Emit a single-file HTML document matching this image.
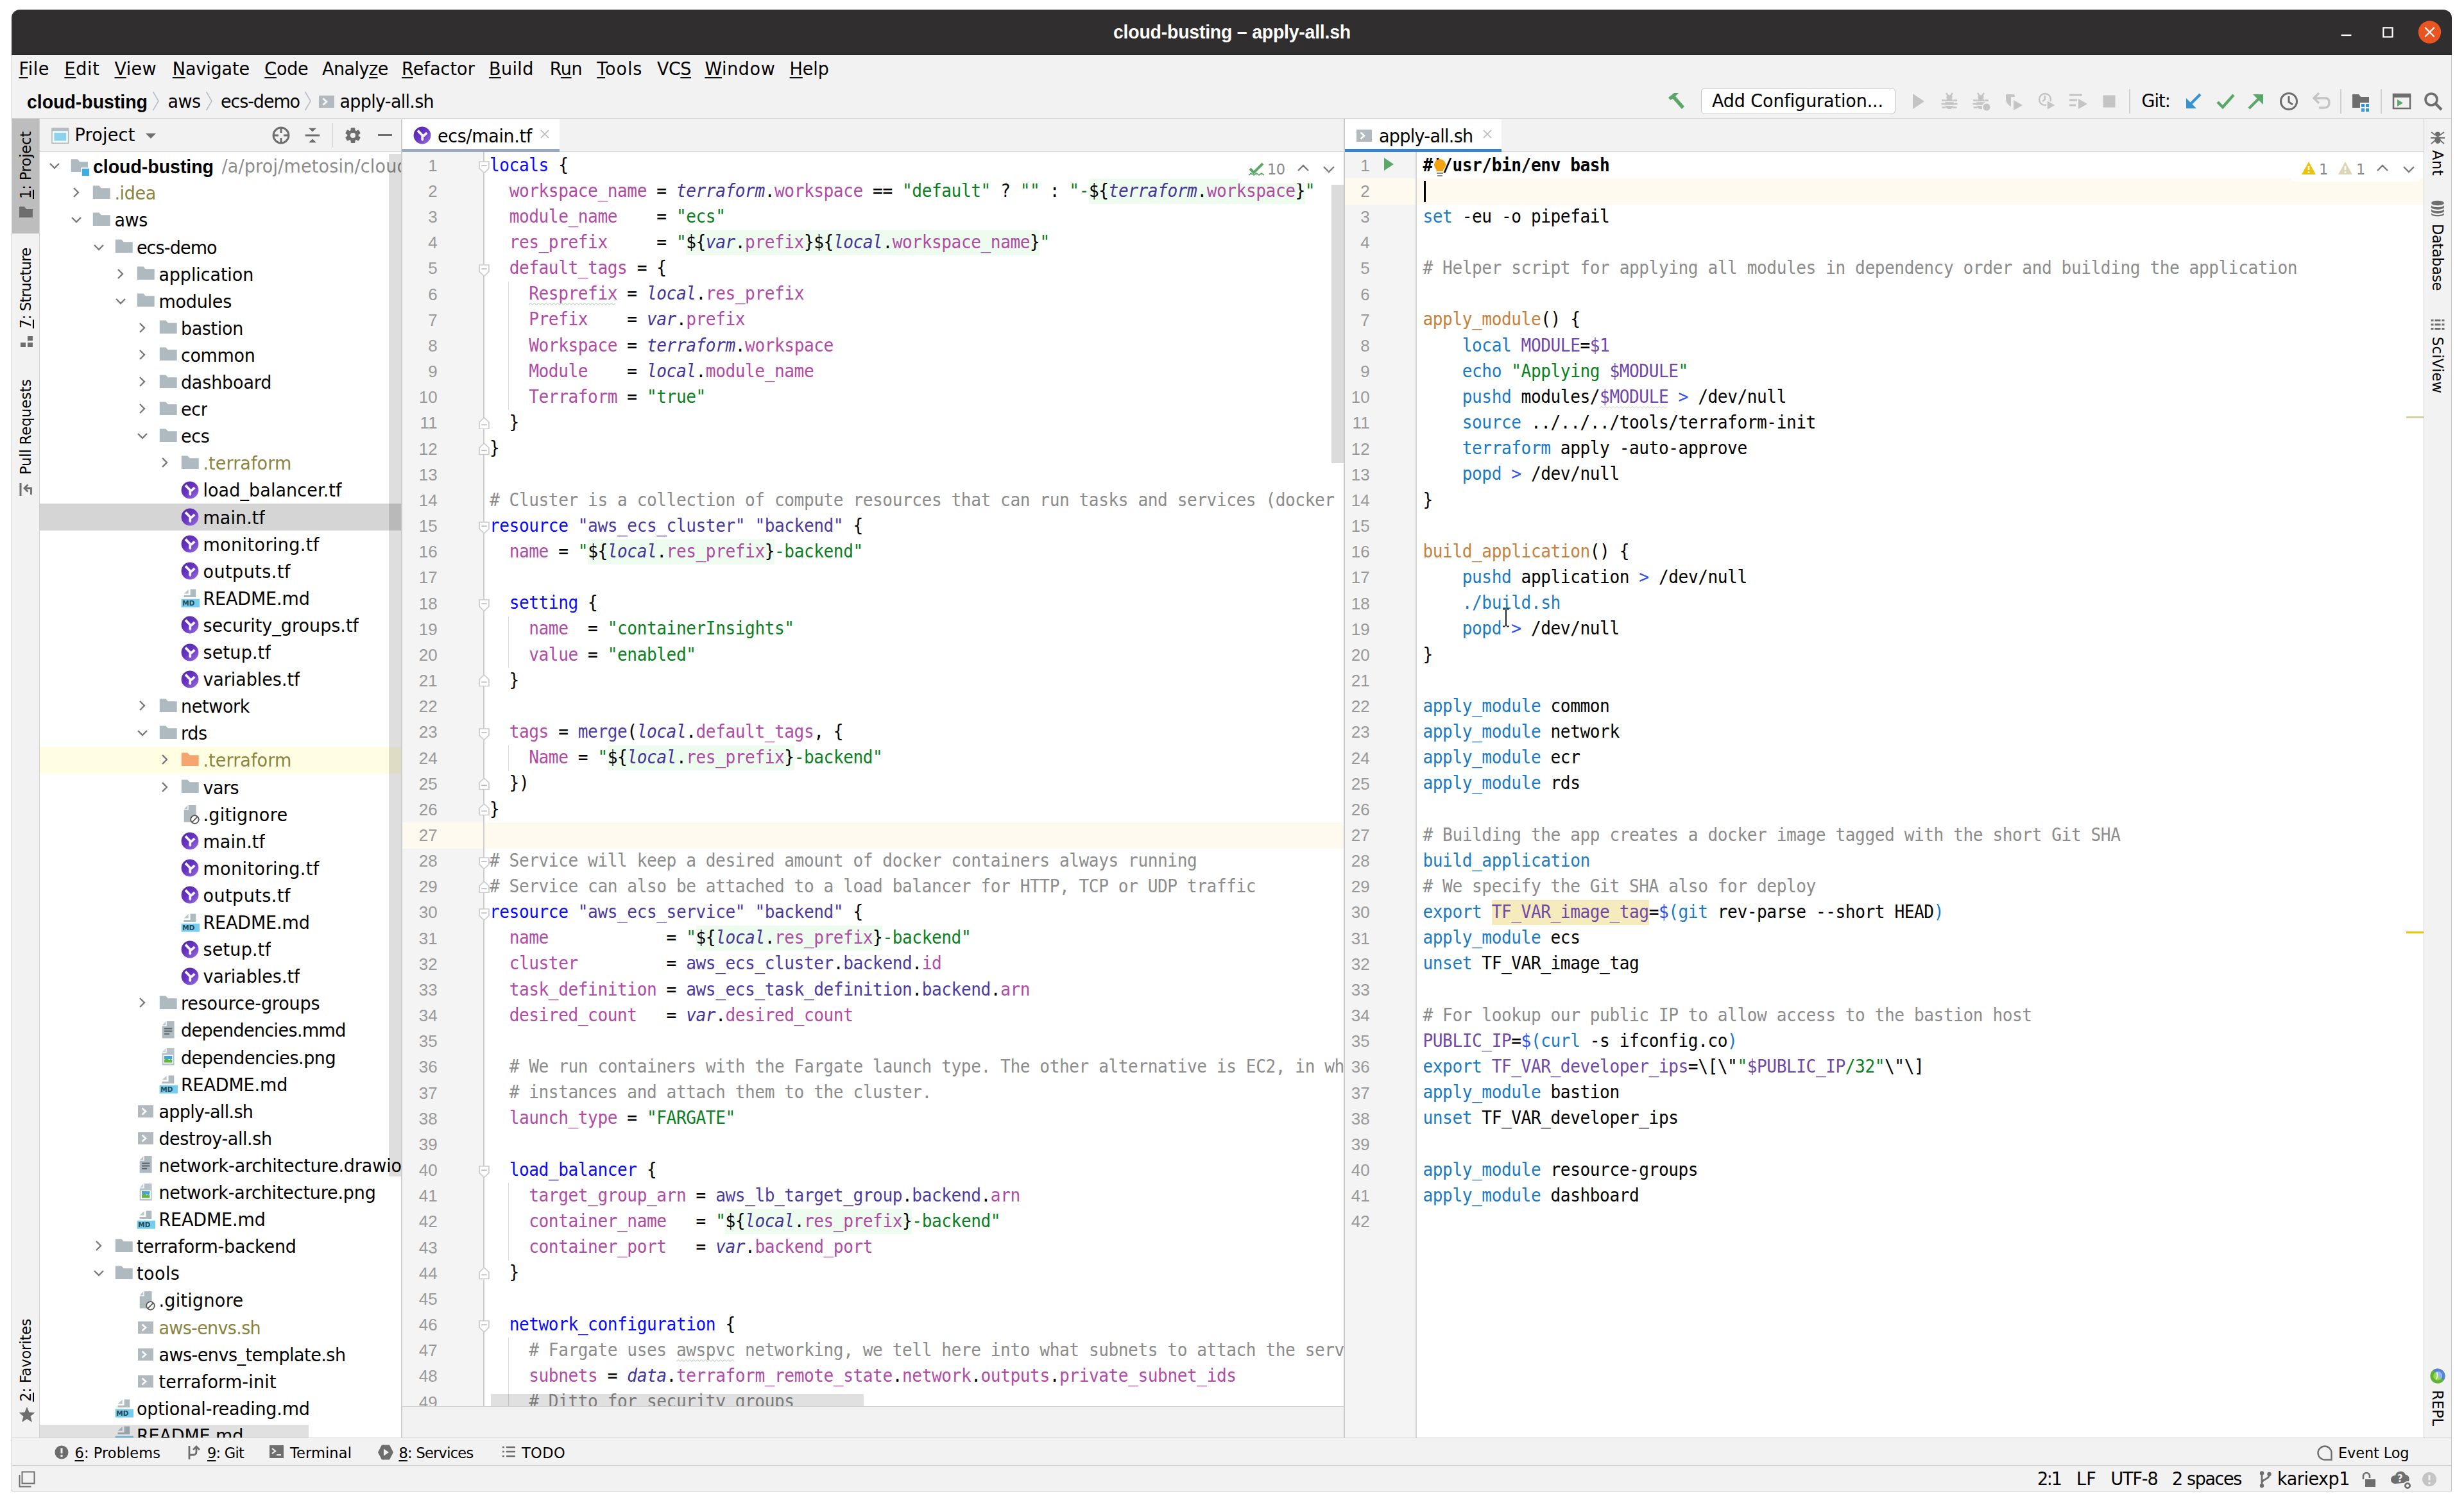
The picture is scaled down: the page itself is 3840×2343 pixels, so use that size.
<!DOCTYPE html>
<html lang="en"><head><meta charset="utf-8"><title>cloud-busting – apply-all.sh</title>
<style>
*{box-sizing:border-box}
html,body{margin:0;padding:0}
body{width:3840px;height:2343px;background:#fff;position:relative;overflow:hidden;font-family:'DejaVu Sans','Liberation Sans',sans-serif;font-size:27px;letter-spacing:-.35px;color:#000;-webkit-font-smoothing:antialiased}
div,svg{position:absolute}
div{white-space:pre}
span{white-space:pre}
u{text-decoration:underline;text-decoration-thickness:1.8px;text-underline-offset:2.5px}
.m{font-family:'DejaVu Sans Mono','Liberation Mono',monospace;font-size:25.44px;letter-spacing:0}
.ln{font-family:'DejaVu Sans Mono','Liberation Mono',monospace;font-size:26.2px;letter-spacing:-.457px;height:40.16px;line-height:40.16px;transform:scaleY(1.0875);transform-origin:0 29.14px}
.no{font-family:'Liberation Sans','DejaVu Sans',sans-serif;font-size:26px;letter-spacing:.2px;color:#999;text-align:right;height:40.16px;line-height:40.16px;width:60px}
.tr{height:42px;line-height:42px}
.k{color:#0a0aff}.p{color:#b04ba6}.s{color:#0a8020}.i{color:#43359a;font-style:italic}.r{color:#4b3aa0}.c{color:#8c8c8c}
.j{background:#edfcee;padding:2.17px 0 4.27px}
.b{color:#1a7bc4}.v{color:#7048a8}.f{color:#c8813c}.o{color:#2c50f5}.B{font-weight:bold}
.ol{color:#8a8440}
</style></head>
<body>

<svg width="0" height="0" style="left:0;top:0"><defs>
<symbol id="fold" viewBox="0 0 32 32"><path d="M2.800 4.600H12.400L15.700 8.300H29.700V24.900H2.800Z" fill="#aeb9c0"/></symbol>
<symbol id="foldx" viewBox="0 0 32 32"><path d="M2.800 4.600H12.400L15.700 8.300H29.700V24.900H2.800Z" fill="#f4a570"/></symbol>
<linearGradient id="tfg" x1="0.15" y1="0.1" x2="0.85" y2="0.9"><stop offset="0" stop-color="#552aa8"/><stop offset=".5" stop-color="#6a35c4"/><stop offset="1" stop-color="#8d66d4"/></linearGradient>
<symbol id="tf" viewBox="0 0 32 32"><circle cx="16" cy="16" r="13.400" fill="url(#tfg)"/><path d="M9 8.600L16.300 16 M23.300 12.200L17.600 17.300 M16.300 14.500V23.200" stroke="#fff" stroke-width="3.800" fill="none" opacity=".96"/><path d="M14.400 23.200h3.800l-1.900 1.800z" fill="#fff" opacity=".96"/></symbol>
<symbol id="md" viewBox="0 0 32 32"><path d="M16.600 2.500H25.300V15H6.500V12.100H16.600Z" fill="#aeb9c0"/><path d="M13.700 3.100V9.400H6.500Z" fill="#bcc5cb"/><rect x="2.600" y="17.700" width="28.400" height="12.900" fill="#74cdec"/><text x="4.200" y="28.200" font-size="10.500" font-weight="bold" fill="#2a4754" font-family="'DejaVu Sans','Liberation Sans',sans-serif" letter-spacing="0">MD</text></symbol>
<symbol id="sh" viewBox="0 0 32 32"><rect x="4" y="7" width="24" height="19" fill="#b2bac0"/><path d="M10.500 11.500 L16 16.500 L10.500 21.500" stroke="#fff" stroke-width="2.600" fill="none"/></symbol>
<symbol id="doc" viewBox="0 0 32 32"><path d="M13.700 2.100H25.600V28.400H6.700V9.600H13.700Z" fill="#aeb9c0"/><path d="M12.300 2.300V8.200H6.900Z" fill="#bcc5cb"/><path d="M10.100 13.600h12.200M10.100 17.600h12.200M10.100 21.700h8" stroke="#59636a" stroke-width="2"/></symbol>
<symbol id="img" viewBox="0 0 32 32"><path d="M13.700 2.100H25.600V28.400H6.700V9.600H13.700Z" fill="#b9c2c8"/><path d="M12.300 2.300V8.200H6.900Z" fill="#c6ced3"/><rect x="8.600" y="12.600" width="15.200" height="13.400" fill="#fff"/><rect x="10" y="14" width="12.400" height="5" fill="#40a6dd"/><path d="M10 24.600V20l3.600-3 4 3.400 2.400-1.600 2.400 1.800v4z" fill="#62b543"/></symbol>
<symbol id="gi" viewBox="0 0 32 32"><path d="M13.700 2.100H25.600V28.400H6.700V9.600H13.700Z" fill="#aeb9c0"/><path d="M12.300 2.300V8.200H6.900Z" fill="#bcc5cb"/><circle cx="23.500" cy="24.500" r="6.300" fill="#fff" stroke="#555" stroke-width="1.800"/><path d="M19.200 28.800 L27.800 20.200" stroke="#555" stroke-width="1.800"/></symbol>
<symbol id="ar" viewBox="0 0 20 20"><path d="M6 3 L13 10 L6 17" stroke="#7a7a7a" stroke-width="2.4" fill="none"/></symbol>
<symbol id="ad" viewBox="0 0 20 20"><path d="M3 6 L10 13 L17 6" stroke="#7a7a7a" stroke-width="2.4" fill="none"/></symbol>
</defs></svg>

<div style="left:18px;top:15px;width:3803.3px;height:2310px;background:#f2f2f2;border-radius:13px 13px 0 0;border:1.3px solid #c4c4c4;border-top:none;"></div>
<div style="left:18px;top:15px;width:3803.3px;height:71px;background:#302e2f;border-radius:13px 13px 0 0;"></div>
<div style="left:18px;top:15px;height:71px;line-height:71px;transform:scaleY(1.035);transform-origin:0 44.8px;width:3804px;text-align:center;"><span style="font-family:'Liberation Sans','DejaVu Sans',sans-serif;font-size:28.5px;font-weight:700;letter-spacing:-0.246px;color:#fff;">cloud-busting – apply-all.sh</span></div>
<svg style="left:3600px;top:15px" width="222" height="71"><path d="M48.600 39.900h15.800" stroke="#fff" stroke-width="2.400"/><rect x="114.300" y="28.300" width="14.200" height="14.200" fill="none" stroke="#fff" stroke-width="2.200"/><circle cx="186.500" cy="35.100" r="17.700" fill="#e95420"/><path d="M179.300 27.900l14.400 14.400M193.700 27.900l-14.400 14.400" stroke="#fff" stroke-width="2.200"/></svg>
<div style="left:18px;top:85px;width:3803.3px;height:1.2px;background:#1c1b1b;"></div>
<div style="left:29.5px;top:84.5px;height:46px;line-height:46px;transform:scaleY(1.035);transform-origin:0 32.3px;"><span style="letter-spacing:0.578px;"><u>F</u>ile</span></div>
<div style="left:100.4px;top:84.5px;height:46px;line-height:46px;transform:scaleY(1.035);transform-origin:0 32.3px;"><span style="letter-spacing:0.676px;"><u>E</u>dit</span></div>
<div style="left:178.5px;top:84.5px;height:46px;line-height:46px;transform:scaleY(1.035);transform-origin:0 32.3px;"><span style="letter-spacing:0.355px;"><u>V</u>iew</span></div>
<div style="left:268.8px;top:84.5px;height:46px;line-height:46px;transform:scaleY(1.035);transform-origin:0 32.3px;"><span style="letter-spacing:-0.126px;"><u>N</u>avigate</span></div>
<div style="left:412.3px;top:84.5px;height:46px;line-height:46px;transform:scaleY(1.035);transform-origin:0 32.3px;"><span style="letter-spacing:-0.231px;"><u>C</u>ode</span></div>
<div style="left:502.0px;top:84.5px;height:46px;line-height:46px;transform:scaleY(1.035);transform-origin:0 32.3px;"><span style="letter-spacing:-0.529px;">Analy<u>z</u>e</span></div>
<div style="left:626.0px;top:84.5px;height:46px;line-height:46px;transform:scaleY(1.035);transform-origin:0 32.3px;"><span style="letter-spacing:0.067px;"><u>R</u>efactor</span></div>
<div style="left:762.1px;top:84.5px;height:46px;line-height:46px;transform:scaleY(1.035);transform-origin:0 32.3px;"><span style="letter-spacing:0.364px;"><u>B</u>uild</span></div>
<div style="left:856.7px;top:84.5px;height:46px;line-height:46px;transform:scaleY(1.035);transform-origin:0 32.3px;"><span style="letter-spacing:-0.394px;">R<u>u</u>n</span></div>
<div style="left:930.3px;top:84.5px;height:46px;line-height:46px;transform:scaleY(1.035);transform-origin:0 32.3px;"><span style="letter-spacing:0.897px;"><u>T</u>ools</span></div>
<div style="left:1024.0px;top:84.5px;height:46px;line-height:46px;transform:scaleY(1.035);transform-origin:0 32.3px;"><span style="letter-spacing:-0.49px;">VC<u>S</u></span></div>
<div style="left:1098.4px;top:84.5px;height:46px;line-height:46px;transform:scaleY(1.035);transform-origin:0 32.3px;"><span style="letter-spacing:0.572px;"><u>W</u>indow</span></div>
<div style="left:1230.6px;top:84.5px;height:46px;line-height:46px;transform:scaleY(1.035);transform-origin:0 32.3px;"><span style="letter-spacing:-0.091px;"><u>H</u>elp</span></div>
<div style="left:42px;top:135px;height:48px;line-height:48px;transform:scaleY(1.035);transform-origin:0 33.3px;"><span style="font-family:'Liberation Sans','DejaVu Sans',sans-serif;font-size:28.5px;font-weight:700;letter-spacing:-0.03px;">cloud-busting</span></div>
<div style="left:261.5px;top:135px;height:48px;line-height:48px;transform:scaleY(1.035);transform-origin:0 33.3px;"><span style="letter-spacing:-0.568px;">aws</span></div>
<div style="left:344px;top:135px;height:48px;line-height:48px;transform:scaleY(1.035);transform-origin:0 33.3px;"><span style="letter-spacing:-1.105px;">ecs-demo</span></div>
<div style="left:529.5px;top:135px;height:48px;line-height:48px;transform:scaleY(1.035);transform-origin:0 33.3px;"><span style="letter-spacing:-0.699px;">apply-all.sh</span></div>
<svg style="left:235px;top:141.500px" width="16" height="32"><path d="M3.500 1 L12 15.500 L3.500 30" stroke="#b5bdc6" stroke-width="1.600" fill="none"/></svg>
<svg style="left:317.8px;top:141.500px" width="16" height="32"><path d="M3.500 1 L12 15.500 L3.500 30" stroke="#b5bdc6" stroke-width="1.600" fill="none"/></svg>
<svg style="left:472.3px;top:141.500px" width="16" height="32"><path d="M3.500 1 L12 15.500 L3.500 30" stroke="#b5bdc6" stroke-width="1.600" fill="none"/></svg>
<svg style="left:492.5px;top:141.5px" width="32" height="32"><use href="#sh"/></svg>
<div style="left:19px;top:184.2px;width:3801.3px;height:1.7px;background:#d3d3d3;"></div>
<div style="left:2651px;top:137px;width:303px;height:41px;background:#fff;border:1.5px solid #c4c4c4;border-radius:6px;"></div>
<div style="left:2668px;top:137px;height:41px;line-height:41px;transform:scaleY(1.035);transform-origin:0 29.8px;"><span style="letter-spacing:-0.136px;">Add Configuration...</span></div>
<div style="left:3337.5px;top:137px;height:41px;line-height:41px;transform:scaleY(1.035);transform-origin:0 29.8px;"><span style="letter-spacing:-0.902px;">Git:</span></div>
<div style="left:3317.8px;top:139px;width:2px;height:38px;background:#d0d0d0;"></div>
<div style="left:3647px;top:139px;width:2px;height:38px;background:#d0d0d0;"></div>
<div style="left:3710px;top:139px;width:2px;height:38px;background:#d0d0d0;"></div>
<svg style="left:2597px;top:142px" width="32" height="32" viewBox="0 0 32 32"><path d="M3 10 L12 3 L19 3 L14 8 L28 24 L24 28 L10 12 L6 14 Z" fill="#59a869"/></svg>
<svg style="left:2974px;top:142px" width="32" height="32" viewBox="0 0 32 32"><path d="M7 4 L25 16 L7 28 Z" fill="#c4c4c4"/></svg>
<svg style="left:3022.4px;top:142px" width="32" height="32" viewBox="0 0 32 32"><ellipse cx="16" cy="19.500" rx="6.800" ry="8.800" fill="#c4c4c4"/><ellipse cx="16" cy="9.500" rx="4.600" ry="3.200" fill="#c4c4c4"/><path d="M11 3l3.500 5M21 3l-3.500 5M4 14.500h6M3.500 20h6M4.500 25.500h6M22 14.500h6M22.500 20h6M21.500 25.500h6" stroke="#c4c4c4" stroke-width="2.300"/><path d="M10 16.700h12M10 22.300h12" stroke="#f2f2f2" stroke-width="1.300"/></svg>
<svg style="left:3071px;top:142px" width="32" height="32" viewBox="0 0 32 32"><ellipse cx="16" cy="19.500" rx="6.800" ry="8.800" fill="#c4c4c4"/><ellipse cx="16" cy="9.500" rx="4.600" ry="3.200" fill="#c4c4c4"/><path d="M11 3l3.500 5M21 3l-3.500 5M4 14.500h6M3.500 20h6M4.500 25.500h6M22 14.500h6M22.500 20h6M21.500 25.500h6" stroke="#c4c4c4" stroke-width="2.300"/><path d="M10 16.700h12M10 22.300h12" stroke="#f2f2f2" stroke-width="1.300"/><circle cx="25" cy="25" r="6.5" fill="#c4c4c4" stroke="#f2f2f2" stroke-width="2"/></svg>
<svg style="left:3122.4px;top:142px" width="32" height="32" viewBox="0 0 32 32"><path d="M4 5 L16 5 Q18 5 18 9 L12 9 L12 24 Q4 20 4 12 Z" fill="#c4c4c4"/><path d="M16 14 L30 22 L16 30 Z" fill="#c4c4c4"/></svg>
<svg style="left:3174px;top:142px" width="32" height="32" viewBox="0 0 32 32"><circle cx="13" cy="13" r="9" fill="none" stroke="#c4c4c4" stroke-width="2.4"/><path d="M13 7v6l-4 3" stroke="#c4c4c4" stroke-width="2.2" fill="none"/><path d="M16 14 L30 22 L16 30 Z" fill="#c4c4c4" stroke="#f2f2f2" stroke-width="1.5"/></svg>
<svg style="left:3223px;top:142px" width="32" height="32" viewBox="0 0 32 32"><path d="M2 6h20M2 14h12M2 22h10" stroke="#c4c4c4" stroke-width="3"/><path d="M16 12 L30 20 L16 28 Z" fill="#c4c4c4"/></svg>
<svg style="left:3271.4px;top:142px" width="32" height="32" viewBox="0 0 32 32"><rect x="6.5" y="6.5" width="19" height="19" fill="#c4c4c4"/></svg>
<svg style="left:3402.4px;top:142px" width="32" height="32" viewBox="0 0 32 32"><path d="M27 5 L11 21" stroke="#3592d3" stroke-width="4.200" fill="none"/><path d="M5 11 L5 27 L21 27 Z" fill="#3592d3"/></svg>
<svg style="left:3452px;top:142px" width="32" height="32" viewBox="0 0 32 32"><path d="M4 17 L12 25 L29 6" stroke="#59a869" stroke-width="4.4" fill="none"/></svg>
<svg style="left:3500px;top:142px" width="32" height="32" viewBox="0 0 32 32"><path d="M5 27 L21 11" stroke="#59a869" stroke-width="4.200" fill="none"/><path d="M11 5 L27 5 L27 21 Z" fill="#59a869"/></svg>
<svg style="left:3550.5px;top:142px" width="32" height="32" viewBox="0 0 32 32"><circle cx="16" cy="16" r="12.5" fill="none" stroke="#6e6e6e" stroke-width="3"/><path d="M16 8v9l6 4" stroke="#6e6e6e" stroke-width="3" fill="none"/></svg>
<svg style="left:3602px;top:142px" width="32" height="32" viewBox="0 0 32 32"><path d="M6 11 L22 11 Q28 11 28 18 Q28 26 20 26 L12 26" stroke="#c4c4c4" stroke-width="3.4" fill="none"/><path d="M12 3 L4 11 L12 19" stroke="#c4c4c4" stroke-width="3.4" fill="none"/></svg>
<svg style="left:3663.6px;top:142px" width="32" height="32" viewBox="0 0 32 32"><path d="M2 5 L12 5 L15 9 L28 9 L28 18 L14 18 L14 26 L2 26 Z" fill="#6e6e6e"/><rect x="16" y="20" width="5" height="5" fill="#3592d3"/><rect x="23" y="20" width="5" height="5" fill="#3592d3"/><rect x="16" y="27" width="5" height="5" fill="#3592d3"/><rect x="23" y="27" width="5" height="5" fill="#3592d3"/></svg>
<svg style="left:3726.5px;top:142px" width="32" height="32" viewBox="0 0 32 32"><rect x="3" y="5" width="26" height="22" fill="none" stroke="#6e6e6e" stroke-width="2.6"/><rect x="3" y="4" width="26" height="6" fill="#6e6e6e"/><path d="M9 13 L18 18.5 L9 24 Z" fill="#59a869"/></svg>
<svg style="left:3776px;top:142px" width="32" height="32" viewBox="0 0 32 32"><circle cx="13" cy="13" r="9" fill="none" stroke="#6e6e6e" stroke-width="3.6"/><path d="M20 20 L29 29" stroke="#6e6e6e" stroke-width="4.4"/></svg>
<div style="left:19px;top:185px;width:43px;height:2056px;background:#f2f2f2;border-right:1px solid #d0d0d0;"></div>
<div style="left:19px;top:185px;width:42px;height:178.5px;background:#bdbdbd;"></div>
<div style="left:23.0px;top:309.7px;width:105.1px;height:34px;line-height:34px;transform-origin:0 0;transform:rotate(-90deg);font-size:22.5px;letter-spacing:-0.093px;"><u>1</u>: Project</div>
<svg style="left:29px;top:321px" width="24" height="19" viewBox="0 0 24 19"><path d="M1 18 L1 1 L9 1 L12 5 L22 5 L22 18 Z" fill="#6e6e6e"/></svg>
<div style="left:23.0px;top:512px;width:125.5px;height:34px;line-height:34px;transform-origin:0 0;transform:rotate(-90deg);font-size:22.5px;letter-spacing:-0.685px;"><u>7</u>: Structure</div>
<svg style="left:30px;top:523px" width="24" height="20" viewBox="0 0 24 20"><rect x="2" y="11" width="8" height="7" fill="#6e6e6e"/><rect x="13" y="11" width="8" height="7" fill="#6e6e6e"/><rect x="13" y="1" width="8" height="7" fill="#6e6e6e"/></svg>
<div style="left:23.0px;top:739.5px;width:149.0px;height:34px;line-height:34px;transform-origin:0 0;transform:rotate(-90deg);font-size:22.5px;letter-spacing:-0.094px;">Pull Requests</div>
<svg style="left:29px;top:753px" width="24" height="20" viewBox="0 0 24 20"><path d="M3 0v20" stroke="#6e6e6e" stroke-width="3"/><path d="M9.500 8h10v10" stroke="#6e6e6e" stroke-width="2.800" fill="none"/><path d="M14.500 2.500l-5.500 5.500 5.500 5.500" stroke="#6e6e6e" stroke-width="2.800" fill="none"/></svg>
<div style="left:23.0px;top:2185px;width:129.5px;height:34px;line-height:34px;transform-origin:0 0;transform:rotate(-90deg);font-size:22.5px;letter-spacing:-0.099px;"><u>2</u>: Favorites</div>
<svg style="left:29px;top:2192px" width="26" height="26" viewBox="0 0 26 26"><path d="M13 1 L16.5 9.5 L25.5 10 L18.5 16 L21 25 L13 20 L5 25 L7.5 16 L0.5 10 L9.5 9.5 Z" fill="#6e6e6e"/></svg>
<div style="left:3777px;top:185px;width:43.3px;height:2056px;background:#f2f2f2;border-left:1.4px solid #d0d0d0;"></div>
<svg style="left:3787px;top:202px" width="24" height="24" viewBox="0 0 24 24"><ellipse cx="12" cy="7" rx="4" ry="3.5" fill="#6e6e6e"/><ellipse cx="12" cy="16" rx="4.5" ry="6" fill="#6e6e6e"/><path d="M2 4l7 5M22 4l-7 5M1 13h8M23 13h-8M2 22l7-6M22 22l-7-6" stroke="#6e6e6e" stroke-width="1.8"/></svg>
<div style="left:3815.7px;top:233.6px;width:40.400000000000006px;height:34px;line-height:34px;transform-origin:0 0;transform:rotate(90deg);font-size:22.5px;letter-spacing:0.639px;">Ant</div>
<svg style="left:3788px;top:312px" width="22" height="26" viewBox="0 0 22 26"><ellipse cx="11" cy="4.5" rx="10" ry="3.8" fill="#6e6e6e"/><path d="M1 7.5c0 2 4 3.6 10 3.6s10-1.600 10-3.600v3.600c0 2-4 3.600-10 3.600s-10-1.600-10-3.600z M1 13.500c0 2 4 3.600 10 3.600s10-1.600 10-3.600v3.600c0 2-4 3.600-10 3.600s-10-1.600-10-3.600z M1 19.500c0 2 4 3.600 10 3.600s10-1.600 10-3.600v2.200c0 2-4 3.600-10 3.600s-10-1.600-10-3.600z" fill="#6e6e6e"/></svg>
<div style="left:3815.7px;top:349px;width:104px;height:34px;line-height:34px;transform-origin:0 0;transform:rotate(90deg);font-size:22.5px;letter-spacing:-0.42px;">Database</div>
<svg style="left:3788px;top:497px" width="22" height="18" viewBox="0 0 22 18"><path d="M0.500 2.500h4M6.500 2.500h9M17.500 2.500h4M0.500 9h4M6.500 9h9M17.500 9h4M0.500 15.500h4M6.500 15.500h9M17.500 15.500h4" stroke="#6e6e6e" stroke-width="3.200"/></svg>
<div style="left:3815.7px;top:524.7px;width:88.29999999999995px;height:34px;line-height:34px;transform-origin:0 0;transform:rotate(90deg);font-size:22.5px;letter-spacing:0.284px;">SciView</div>
<svg style="left:3786.900px;top:2133.100px" width="24" height="24" viewBox="0 0 24 24"><circle cx="12" cy="12" r="11.600" fill="#62b132"/><path d="M5 2.800A11.600 11.600 0 0 1 21.200 19z" fill="#5881d8"/><circle cx="12" cy="12" r="6.800" fill="#91dc47"/><path d="M7.800 6.600A6.800 6.800 0 0 1 17.400 16.200z" fill="#8fb5fe"/><path d="M9.500 17c2.500-3 2.500-7 1-10.500" stroke="#fff" stroke-width="2" fill="none" opacity=".85"/></svg>
<div style="left:3815.7px;top:2166.9px;width:56.09999999999991px;height:34px;line-height:34px;transform-origin:0 0;transform:rotate(90deg);font-size:22.5px;letter-spacing:0.033px;">REPL</div>
<div style="left:19px;top:2241px;width:3801.3px;height:44px;background:#f2f2f2;border-top:1px solid #d0d0d0;border-bottom:1px solid #d0d0d0;"></div>
<div style="left:116.5px;top:2243px;height:42px;line-height:42px;transform:scaleY(1.035);transform-origin:0 30.3px;"><span style="font-size:22.5px;letter-spacing:0.067px"><u>6</u>: Problems</span></div>
<div style="left:323px;top:2243px;height:42px;line-height:42px;transform:scaleY(1.035);transform-origin:0 30.3px;"><span style="font-size:22.5px;letter-spacing:-0.76px"><u>9</u>: Git</span></div>
<div style="left:452px;top:2243px;height:42px;line-height:42px;transform:scaleY(1.035);transform-origin:0 30.3px;"><span style="font-size:22.5px;letter-spacing:0.113px">Terminal</span></div>
<div style="left:621.5px;top:2243px;height:42px;line-height:42px;transform:scaleY(1.035);transform-origin:0 30.3px;"><span style="font-size:22.5px;letter-spacing:-0.722px"><u>8</u>: Services</span></div>
<div style="left:813px;top:2243px;height:42px;line-height:42px;transform:scaleY(1.035);transform-origin:0 30.3px;"><span style="font-size:22.5px;letter-spacing:0.375px">TODO</span></div>
<div style="left:3644px;top:2243px;height:42px;line-height:42px;transform:scaleY(1.035);transform-origin:0 30.3px;"><span style="font-size:22.5px;letter-spacing:-0.144px">Event Log</span></div>
<svg style="left:84px;top:2252px" width="24" height="24" viewBox="0 0 24 24"><circle cx="12" cy="12" r="10.5" fill="#6e6e6e"/><path d="M12 5.5v8" stroke="#f2f2f2" stroke-width="3"/><circle cx="12" cy="17.5" r="1.8" fill="#f2f2f2"/></svg>
<svg style="left:291px;top:2251px" width="26" height="26" viewBox="0 0 26 26"><path d="M4 3v21 M4 17h6q5 0 5-5v-7 M10 9l5-5 5 5" stroke="#6e6e6e" stroke-width="2.8" fill="none"/></svg>
<svg style="left:419px;top:2252px" width="24" height="22" viewBox="0 0 24 22"><rect x="1" y="1" width="22" height="20" fill="#6e6e6e"/><path d="M5 6l5 4-5 4M12 16h7" stroke="#f2f2f2" stroke-width="2.2" fill="none"/></svg>
<svg style="left:588px;top:2251px" width="26" height="26" viewBox="0 0 26 26"><path d="M7 1.5h12l6 11.5-6 11.5h-12l-6-11.5z" fill="#6e6e6e"/><path d="M10 7.5l8 5.5-8 5.5z" fill="#f2f2f2"/></svg>
<svg style="left:782px;top:2253px" width="22" height="20" viewBox="0 0 22 20"><path d="M1 3h3M7 3h14M1 10h3M7 10h14M1 17h3M7 17h14" stroke="#6e6e6e" stroke-width="2.6"/></svg>
<svg style="left:3610px;top:2252px" width="26" height="26" viewBox="0 0 26 26"><path d="M13 2.5a10.5 10.5 0 1 0 0 21h10.5v-10.5a10.5 10.5 0 0 0-10.5-10.5z" fill="none" stroke="#6e6e6e" stroke-width="2.4"/></svg>
<svg style="left:29px;top:2293px" width="26" height="26" viewBox="0 0 26 26"><rect x="5.5" y="1.5" width="19" height="18" fill="none" stroke="#6e6e6e" stroke-width="2"/><path d="M1.5 6v18.5h18" fill="none" stroke="#6e6e6e" stroke-width="2"/></svg>
<div style="left:3175px;top:2286px;height:39px;line-height:39px;transform:scaleY(1.035);transform-origin:0 28.8px;"><span style="letter-spacing:-2.318px;">2:1</span></div>
<div style="left:3236px;top:2286px;height:39px;line-height:39px;transform:scaleY(1.035);transform-origin:0 28.8px;"><span style="letter-spacing:0.211px;">LF</span></div>
<div style="left:3289.5px;top:2286px;height:39px;line-height:39px;transform:scaleY(1.035);transform-origin:0 28.8px;"><span style="letter-spacing:-1.144px;">UTF-8</span></div>
<div style="left:3385px;top:2286px;height:39px;line-height:39px;transform:scaleY(1.035);transform-origin:0 28.8px;"><span style="letter-spacing:-1.381px;">2 spaces</span></div>
<div style="left:3549px;top:2286px;height:39px;line-height:39px;transform:scaleY(1.035);transform-origin:0 28.8px;"><span style="letter-spacing:-0.469px;">kariexp1</span></div>
<svg style="left:3518px;top:2291px" width="26" height="30" viewBox="0 0 26 30"><circle cx="7" cy="5.500" r="3.200" fill="#6e6e6e"/><circle cx="7" cy="25" r="3.200" fill="#6e6e6e"/><circle cx="18.500" cy="7" r="3.200" fill="#6e6e6e"/><path d="M7 6v18M18.500 8c0 8-11.500 6-11.500 13" stroke="#6e6e6e" stroke-width="2.800" fill="none"/></svg>
<svg style="left:3680px;top:2292px" width="26" height="28" viewBox="0 0 26 28"><rect x="6" y="14" width="16" height="12" fill="#6e6e6e"/><path d="M3 14v-5a5 5 0 0 1 10 0v3" fill="none" stroke="#6e6e6e" stroke-width="2.6"/></svg>
<svg style="left:3723px;top:2291px" width="40" height="32" viewBox="0 0 40 32"><path d="M9 22a6.500 6.500 0 0 1 1-13a8.500 8.500 0 0 1 16-1a6.500 6.500 0 0 1 1.500 12.500z" fill="#6e6e6e"/><text x="13" y="19" font-size="15" font-weight="bold" fill="#f2f2f2" font-family="'DejaVu Sans',sans-serif">?</text><circle cx="29" cy="25" r="6" fill="#6e6e6e" stroke="#f2f2f2" stroke-width="2"/><circle cx="29" cy="25" r="2.200" fill="#f2f2f2"/></svg>
<svg style="left:3774px;top:2294px" width="24" height="24" viewBox="0 0 24 24"><circle cx="12" cy="12" r="11" fill="#c4c4c4"/><path d="M12 5.5v8" stroke="#f2f2f2" stroke-width="3"/><circle cx="12" cy="18" r="1.8" fill="#f2f2f2"/></svg>
<div style="left:62px;top:185px;width:564px;height:2056px;background:#fff;"></div>
<div style="left:62px;top:185px;width:564px;height:52px;background:#f2f2f2;border-bottom:1px solid #d0d0d0;"></div>
<svg style="left:79.500px;top:199.400px" width="28" height="26" viewBox="0 0 28 26"><rect x="1" y="1" width="25.600" height="23.200" fill="#f7f8f9" stroke="#a9b3ba" stroke-width="1.400"/><rect x="1" y="1" width="25.600" height="4.200" fill="#b4bdc4"/><rect x="4.400" y="7.900" width="18.800" height="12.600" fill="#8ed3ec"/></svg>
<div style="left:116.5px;top:187px;height:48px;line-height:48px;transform:scaleY(1.035);transform-origin:0 33.3px;"><span style="letter-spacing:0.23px;">Project</span></div>
<svg style="left:225px;top:206px" width="20" height="12" viewBox="0 0 20 12"><path d="M2 2h16l-8 8z" fill="#6e6e6e"/></svg>
<svg style="left:421.700px;top:194.900px" width="32" height="32" viewBox="0 0 32 32"><circle cx="16" cy="16" r="11.900" fill="none" stroke="#6e6e6e" stroke-width="3"/><path d="M16 4v8M16 20v8M4 16h8M20 16h8" stroke="#6e6e6e" stroke-width="3"/></svg>
<svg style="left:471.200px;top:194.900px" width="32" height="32" viewBox="0 0 32 32"><path d="M4.800 16h22.400" stroke="#6e6e6e" stroke-width="3"/><path d="M10 4.800h12l-6 5.600z M10 27.200h12l-6-5.600z" fill="#6e6e6e"/></svg>
<div style="left:517.8px;top:192px;width:1.6px;height:37.5px;background:#d0d0d0;"></div>
<svg style="left:534.200px;top:194.900px" width="32" height="32" viewBox="0 0 32 32"><g transform="translate(16 16)"><g fill="#6e6e6e"><rect x="-3.400" y="-12" width="6.800" height="24" rx="1.500"/><rect x="-3.400" y="-12" width="6.800" height="24" rx="1.500" transform="rotate(60)"/><rect x="-3.400" y="-12" width="6.800" height="24" rx="1.500" transform="rotate(120)"/><circle r="8.800"/></g><circle r="4.100" fill="#f2f2f2"/></g></svg>
<div style="left:588.6px;top:209.4px;width:22.7px;height:3px;background:#6e6e6e;"></div>
<div style="left:0;top:0;width:626px;height:2241px;overflow:hidden"><svg style="left:74.6px;top:249.2px" width="20" height="20"><use href="#ad"/></svg><svg style="left:108px;top:241.7px" width="34" height="34" viewBox="0 0 34 34"><path d="M2.700 6.200H13L16.400 10.200H29V26.100H2.700Z" fill="#aeb9c0"/><rect x="18.200" y="19.200" width="14" height="14" fill="#fff"/><rect x="19.800" y="20.800" width="11.200" height="11.300" fill="#3daee0"/></svg><div class="tr" style="left:345.5px;top:239.2px;transform:scaleY(1.035);transform-origin:0 30.3px;max-width:280px;overflow:hidden;"><span style="letter-spacing:0.186px;color:#8c8c8c;">/a/proj/metosin/cloud-busting</span></div><div class="tr" style="left:145px;top:239.2px;transform:scaleY(1.035);transform-origin:0 30.3px;max-width:480.5px;overflow:hidden;"><span style="font-family:'Liberation Sans','DejaVu Sans',sans-serif;font-size:28.5px;font-weight:700;letter-spacing:-0.03px;">cloud-busting</span></div><svg style="left:109.05px;top:290.3px" width="20" height="20"><use href="#ar"/></svg><svg style="left:142.0px;top:284.8px" width="32" height="32"><use href="#fold"/></svg><div class="tr" style="left:178.4px;top:281.3px;transform:scaleY(1.035);transform-origin:0 30.3px;max-width:447.1px;overflow:hidden;"><span style="color:#8a8440;">.idea</span></div><svg style="left:109.05px;top:333.4px" width="20" height="20"><use href="#ad"/></svg><svg style="left:142.0px;top:326.9px" width="32" height="32"><use href="#fold"/></svg><div class="tr" style="left:178.4px;top:323.4px;transform:scaleY(1.035);transform-origin:0 30.3px;max-width:447.1px;overflow:hidden;"><span>aws</span></div><svg style="left:143.5px;top:375.5px" width="20" height="20"><use href="#ad"/></svg><svg style="left:176.5px;top:369.0px" width="32" height="32"><use href="#fold"/></svg><div class="tr" style="left:212.9px;top:365.5px;transform:scaleY(1.035);transform-origin:0 30.3px;max-width:412.6px;overflow:hidden;"><span style="letter-spacing:-0.88px;">ecs-demo</span></div><svg style="left:177.95px;top:416.6px" width="20" height="20"><use href="#ar"/></svg><svg style="left:211.0px;top:411.1px" width="32" height="32"><use href="#fold"/></svg><div class="tr" style="left:247.4px;top:407.6px;transform:scaleY(1.035);transform-origin:0 30.3px;max-width:378.1px;overflow:hidden;"><span style="letter-spacing:-0.103px;">application</span></div><svg style="left:177.95px;top:459.7px" width="20" height="20"><use href="#ad"/></svg><svg style="left:211.0px;top:453.2px" width="32" height="32"><use href="#fold"/></svg><div class="tr" style="left:247.4px;top:449.7px;transform:scaleY(1.035);transform-origin:0 30.3px;max-width:378.1px;overflow:hidden;"><span style="letter-spacing:-0.238px;">modules</span></div><svg style="left:212.4px;top:500.8px" width="20" height="20"><use href="#ar"/></svg><svg style="left:245.5px;top:495.3px" width="32" height="32"><use href="#fold"/></svg><div class="tr" style="left:281.9px;top:491.8px;transform:scaleY(1.035);transform-origin:0 30.3px;max-width:343.6px;overflow:hidden;"><span>bastion</span></div><svg style="left:212.4px;top:542.9px" width="20" height="20"><use href="#ar"/></svg><svg style="left:245.5px;top:537.4px" width="32" height="32"><use href="#fold"/></svg><div class="tr" style="left:281.9px;top:533.9px;transform:scaleY(1.035);transform-origin:0 30.3px;max-width:343.6px;overflow:hidden;"><span>common</span></div><svg style="left:212.4px;top:585.0px" width="20" height="20"><use href="#ar"/></svg><svg style="left:245.5px;top:579.5px" width="32" height="32"><use href="#fold"/></svg><div class="tr" style="left:281.9px;top:576.0px;transform:scaleY(1.035);transform-origin:0 30.3px;max-width:343.6px;overflow:hidden;"><span style="letter-spacing:-0.16px;">dashboard</span></div><svg style="left:212.4px;top:627.1px" width="20" height="20"><use href="#ar"/></svg><svg style="left:245.5px;top:621.6px" width="32" height="32"><use href="#fold"/></svg><div class="tr" style="left:281.9px;top:618.1px;transform:scaleY(1.035);transform-origin:0 30.3px;max-width:343.6px;overflow:hidden;"><span>ecr</span></div><svg style="left:212.4px;top:670.2px" width="20" height="20"><use href="#ad"/></svg><svg style="left:245.5px;top:663.7px" width="32" height="32"><use href="#fold"/></svg><div class="tr" style="left:281.9px;top:660.2px;transform:scaleY(1.035);transform-origin:0 30.3px;max-width:343.6px;overflow:hidden;"><span>ecs</span></div><svg style="left:246.85000000000002px;top:711.3px" width="20" height="20"><use href="#ar"/></svg><svg style="left:280.0px;top:705.8px" width="32" height="32"><use href="#fold"/></svg><div class="tr" style="left:316.4px;top:702.3px;transform:scaleY(1.035);transform-origin:0 30.3px;max-width:309.1px;overflow:hidden;"><span style="letter-spacing:0.088px;color:#8a8440;">.terraform</span></div><svg style="left:280.0px;top:747.9px" width="32" height="32"><use href="#tf"/></svg><div class="tr" style="left:316.4px;top:744.4px;transform:scaleY(1.035);transform-origin:0 30.3px;max-width:309.1px;overflow:hidden;"><span style="letter-spacing:0.087px;">load_balancer.tf</span></div><div style="left:62px;top:785.0px;width:564px;height:42px;background:#d5d5d5;"></div><svg style="left:280.0px;top:790.0px" width="32" height="32"><use href="#tf"/></svg><div class="tr" style="left:316.4px;top:786.5px;transform:scaleY(1.035);transform-origin:0 30.3px;max-width:309.1px;overflow:hidden;"><span style="letter-spacing:0.08px;">main.tf</span></div><svg style="left:280.0px;top:832.1px" width="32" height="32"><use href="#tf"/></svg><div class="tr" style="left:316.4px;top:828.6px;transform:scaleY(1.035);transform-origin:0 30.3px;max-width:309.1px;overflow:hidden;"><span style="letter-spacing:0.409px;">monitoring.tf</span></div><svg style="left:280.0px;top:874.2px" width="32" height="32"><use href="#tf"/></svg><div class="tr" style="left:316.4px;top:870.7px;transform:scaleY(1.035);transform-origin:0 30.3px;max-width:309.1px;overflow:hidden;"><span style="letter-spacing:0.48px;">outputs.tf</span></div><svg style="left:280.0px;top:916.3px" width="32" height="32"><use href="#md"/></svg><div class="tr" style="left:316.4px;top:912.8px;transform:scaleY(1.035);transform-origin:0 30.3px;max-width:309.1px;overflow:hidden;"><span style="letter-spacing:-0.13px;">README.md</span></div><svg style="left:280.0px;top:958.4px" width="32" height="32"><use href="#tf"/></svg><div class="tr" style="left:316.4px;top:954.9px;transform:scaleY(1.035);transform-origin:0 30.3px;max-width:309.1px;overflow:hidden;"><span style="letter-spacing:0.013px;">security_groups.tf</span></div><svg style="left:280.0px;top:1000.5px" width="32" height="32"><use href="#tf"/></svg><div class="tr" style="left:316.4px;top:997.0px;transform:scaleY(1.035);transform-origin:0 30.3px;max-width:309.1px;overflow:hidden;"><span style="letter-spacing:0.225px;">setup.tf</span></div><svg style="left:280.0px;top:1042.6px" width="32" height="32"><use href="#tf"/></svg><div class="tr" style="left:316.4px;top:1039.1px;transform:scaleY(1.035);transform-origin:0 30.3px;max-width:309.1px;overflow:hidden;"><span style="letter-spacing:-0.056px;">variables.tf</span></div><svg style="left:212.4px;top:1090.2px" width="20" height="20"><use href="#ar"/></svg><svg style="left:245.5px;top:1084.7px" width="32" height="32"><use href="#fold"/></svg><div class="tr" style="left:281.9px;top:1081.2px;transform:scaleY(1.035);transform-origin:0 30.3px;max-width:343.6px;overflow:hidden;"><span>network</span></div><svg style="left:212.4px;top:1133.3px" width="20" height="20"><use href="#ad"/></svg><svg style="left:245.5px;top:1126.8px" width="32" height="32"><use href="#fold"/></svg><div class="tr" style="left:281.9px;top:1123.3px;transform:scaleY(1.035);transform-origin:0 30.3px;max-width:343.6px;overflow:hidden;"><span>rds</span></div><div style="left:62px;top:1163.9px;width:564px;height:42px;background:#fffde2;"></div><svg style="left:246.85000000000002px;top:1174.4px" width="20" height="20"><use href="#ar"/></svg><svg style="left:280.0px;top:1168.9px" width="32" height="32"><use href="#foldx"/></svg><div class="tr" style="left:316.4px;top:1165.4px;transform:scaleY(1.035);transform-origin:0 30.3px;max-width:309.1px;overflow:hidden;"><span style="letter-spacing:0.088px;color:#8a8440;">.terraform</span></div><svg style="left:246.85000000000002px;top:1216.5px" width="20" height="20"><use href="#ar"/></svg><svg style="left:280.0px;top:1211.0px" width="32" height="32"><use href="#fold"/></svg><div class="tr" style="left:316.4px;top:1207.5px;transform:scaleY(1.035);transform-origin:0 30.3px;max-width:309.1px;overflow:hidden;"><span style="letter-spacing:-0.476px;">vars</span></div><svg style="left:280.0px;top:1253.1px" width="32" height="32"><use href="#gi"/></svg><div class="tr" style="left:316.4px;top:1249.6px;transform:scaleY(1.035);transform-origin:0 30.3px;max-width:309.1px;overflow:hidden;"><span style="letter-spacing:0.27px;">.gitignore</span></div><svg style="left:280.0px;top:1295.2px" width="32" height="32"><use href="#tf"/></svg><div class="tr" style="left:316.4px;top:1291.7px;transform:scaleY(1.035);transform-origin:0 30.3px;max-width:309.1px;overflow:hidden;"><span style="letter-spacing:0.08px;">main.tf</span></div><svg style="left:280.0px;top:1337.3px" width="32" height="32"><use href="#tf"/></svg><div class="tr" style="left:316.4px;top:1333.8px;transform:scaleY(1.035);transform-origin:0 30.3px;max-width:309.1px;overflow:hidden;"><span style="letter-spacing:0.409px;">monitoring.tf</span></div><svg style="left:280.0px;top:1379.4px" width="32" height="32"><use href="#tf"/></svg><div class="tr" style="left:316.4px;top:1375.9px;transform:scaleY(1.035);transform-origin:0 30.3px;max-width:309.1px;overflow:hidden;"><span style="letter-spacing:0.48px;">outputs.tf</span></div><svg style="left:280.0px;top:1421.5px" width="32" height="32"><use href="#md"/></svg><div class="tr" style="left:316.4px;top:1418.0px;transform:scaleY(1.035);transform-origin:0 30.3px;max-width:309.1px;overflow:hidden;"><span style="letter-spacing:-0.13px;">README.md</span></div><svg style="left:280.0px;top:1463.6px" width="32" height="32"><use href="#tf"/></svg><div class="tr" style="left:316.4px;top:1460.1px;transform:scaleY(1.035);transform-origin:0 30.3px;max-width:309.1px;overflow:hidden;"><span style="letter-spacing:0.225px;">setup.tf</span></div><svg style="left:280.0px;top:1505.7px" width="32" height="32"><use href="#tf"/></svg><div class="tr" style="left:316.4px;top:1502.2px;transform:scaleY(1.035);transform-origin:0 30.3px;max-width:309.1px;overflow:hidden;"><span style="letter-spacing:-0.056px;">variables.tf</span></div><svg style="left:212.4px;top:1553.3px" width="20" height="20"><use href="#ar"/></svg><svg style="left:245.5px;top:1547.8px" width="32" height="32"><use href="#fold"/></svg><div class="tr" style="left:281.9px;top:1544.3px;transform:scaleY(1.035);transform-origin:0 30.3px;max-width:343.6px;overflow:hidden;"><span style="letter-spacing:-0.168px;">resource-groups</span></div><svg style="left:245.5px;top:1589.9px" width="32" height="32"><use href="#doc"/></svg><div class="tr" style="left:281.9px;top:1586.4px;transform:scaleY(1.035);transform-origin:0 30.3px;max-width:343.6px;overflow:hidden;"><span style="letter-spacing:-0.621px;">dependencies.mmd</span></div><svg style="left:245.5px;top:1632.0px" width="32" height="32"><use href="#img"/></svg><div class="tr" style="left:281.9px;top:1628.5px;transform:scaleY(1.035);transform-origin:0 30.3px;max-width:343.6px;overflow:hidden;"><span style="letter-spacing:-0.449px;">dependencies.png</span></div><svg style="left:245.5px;top:1674.1px" width="32" height="32"><use href="#md"/></svg><div class="tr" style="left:281.9px;top:1670.6px;transform:scaleY(1.035);transform-origin:0 30.3px;max-width:343.6px;overflow:hidden;"><span style="letter-spacing:-0.13px;">README.md</span></div><svg style="left:211.0px;top:1716.2px" width="32" height="32"><use href="#sh"/></svg><div class="tr" style="left:247.4px;top:1712.7px;transform:scaleY(1.035);transform-origin:0 30.3px;max-width:378.1px;overflow:hidden;"><span style="letter-spacing:-0.666px;">apply-all.sh</span></div><svg style="left:211.0px;top:1758.3px" width="32" height="32"><use href="#sh"/></svg><div class="tr" style="left:247.4px;top:1754.8px;transform:scaleY(1.035);transform-origin:0 30.3px;max-width:378.1px;overflow:hidden;"><span style="letter-spacing:-0.414px;">destroy-all.sh</span></div><svg style="left:211.0px;top:1800.4px" width="32" height="32"><use href="#doc"/></svg><div class="tr" style="left:247.4px;top:1796.9px;transform:scaleY(1.035);transform-origin:0 30.3px;max-width:378.1px;overflow:hidden;"><span style="letter-spacing:-0.138px;">network-architecture.drawio</span></div><svg style="left:211.0px;top:1842.5px" width="32" height="32"><use href="#img"/></svg><div class="tr" style="left:247.4px;top:1839.0px;transform:scaleY(1.035);transform-origin:0 30.3px;max-width:378.1px;overflow:hidden;"><span style="letter-spacing:-0.185px;">network-architecture.png</span></div><svg style="left:211.0px;top:1884.6px" width="32" height="32"><use href="#md"/></svg><div class="tr" style="left:247.4px;top:1881.1px;transform:scaleY(1.035);transform-origin:0 30.3px;max-width:378.1px;overflow:hidden;"><span style="letter-spacing:-0.13px;">README.md</span></div><svg style="left:143.5px;top:1932.2px" width="20" height="20"><use href="#ar"/></svg><svg style="left:176.5px;top:1926.7px" width="32" height="32"><use href="#fold"/></svg><div class="tr" style="left:212.9px;top:1923.2px;transform:scaleY(1.035);transform-origin:0 30.3px;max-width:412.6px;overflow:hidden;"><span style="letter-spacing:-0.196px;">terraform-backend</span></div><svg style="left:143.5px;top:1975.3px" width="20" height="20"><use href="#ad"/></svg><svg style="left:176.5px;top:1968.8px" width="32" height="32"><use href="#fold"/></svg><div class="tr" style="left:212.9px;top:1965.3px;transform:scaleY(1.035);transform-origin:0 30.3px;max-width:412.6px;overflow:hidden;"><span style="letter-spacing:0.459px;">tools</span></div><svg style="left:211.0px;top:2010.9px" width="32" height="32"><use href="#gi"/></svg><div class="tr" style="left:247.4px;top:2007.4px;transform:scaleY(1.035);transform-origin:0 30.3px;max-width:378.1px;overflow:hidden;"><span style="letter-spacing:0.27px;">.gitignore</span></div><svg style="left:211.0px;top:2053.0px" width="32" height="32"><use href="#sh"/></svg><div class="tr" style="left:247.4px;top:2049.5px;transform:scaleY(1.035);transform-origin:0 30.3px;max-width:378.1px;overflow:hidden;"><span style="letter-spacing:-0.67px;color:#8a8440;">aws-envs.sh</span></div><svg style="left:211.0px;top:2095.1px" width="32" height="32"><use href="#sh"/></svg><div class="tr" style="left:247.4px;top:2091.6px;transform:scaleY(1.035);transform-origin:0 30.3px;max-width:378.1px;overflow:hidden;"><span style="letter-spacing:-0.513px;">aws-envs_template.sh</span></div><svg style="left:211.0px;top:2137.2px" width="32" height="32"><use href="#sh"/></svg><div class="tr" style="left:247.4px;top:2133.7px;transform:scaleY(1.035);transform-origin:0 30.3px;max-width:378.1px;overflow:hidden;"><span style="letter-spacing:0.173px;">terraform-init</span></div><svg style="left:176.5px;top:2179.3px" width="32" height="32"><use href="#md"/></svg><div class="tr" style="left:212.9px;top:2175.8px;transform:scaleY(1.035);transform-origin:0 30.3px;max-width:412.6px;overflow:hidden;"><span style="letter-spacing:-0.208px;">optional-reading.md</span></div><svg style="left:176.5px;top:2221.4px" width="32" height="32"><use href="#md"/></svg><div class="tr" style="left:212.9px;top:2217.9px;transform:scaleY(1.035);transform-origin:0 30.3px;max-width:412.6px;overflow:hidden;"><span style="letter-spacing:-0.13px;">README.md</span></div><div style="left:606px;top:240px;width:19px;height:1594px;background:rgba(0,0,0,.13);"></div><div style="left:62px;top:2221px;width:419px;height:20px;background:rgba(0,0,0,.12);"></div></div>
<div style="left:626px;top:185px;width:1468px;height:2056px;background:#f2f2f2;"></div>
<div style="left:626px;top:185px;width:1468px;height:52px;background:#f2f2f2;border-bottom:1px solid #d0d0d0;"></div>
<div style="left:627px;top:186px;width:245px;height:51px;background:#fff;"></div>
<div style="left:627px;top:232px;width:245px;height:5.3px;background:#9ba8bb;"></div>
<svg style="left:641.5px;top:194.7px" width="32" height="32"><use href="#tf"/></svg>
<div style="left:682px;top:189px;height:47px;line-height:47px;transform:scaleY(1.035);transform-origin:0 32.8px;"><span style="letter-spacing:-0.342px;">ecs/main.tf</span></div>
<svg style="left:841px;top:201px" width="16" height="16" viewBox="0 0 16 16"><path d="M2 2l12 12M14 2l-12 12" stroke="#b4b4b4" stroke-width="1.6"/></svg>
<div style="left:626px;top:237px;width:1468px;height:1955px;background:#fff;overflow:hidden;"><div style="left:0px;top:0px;width:128px;height:1955px;background:#f4f4f4;"></div><div style="left:0px;top:1045.0px;width:1468px;height:40.5px;background:#fffaf0;"></div><div style="left:127.1px;top:0px;width:1.9px;height:1955px;background:#cdcdcd;"></div><div style="left:165.63px;top:201.64px;width:1.4px;height:200.79999999999998px;background:#dcdcdc;"></div><div style="left:165.63px;top:723.72px;width:1.4px;height:80.32px;background:#dcdcdc;"></div><div style="left:165.63px;top:924.52px;width:1.4px;height:40.16px;background:#dcdcdc;"></div><div style="left:165.63px;top:1607.24px;width:1.4px;height:120.47999999999999px;background:#dcdcdc;"></div><div style="left:165.63px;top:1848.2px;width:1.4px;height:120.47999999999999px;background:#dcdcdc;"></div><div class="no" style="left:-4px;top:0.84px">1</div><div class="ln" style="left:137px;top:0.5px"><span class="k">locals</span> {</div><div class="no" style="left:-4px;top:41.0px">2</div><div class="ln" style="left:137px;top:40.66px">  <span class="p">workspace_name</span> = <span class="i">terraform</span>.<span class="p">workspace</span> == <span class="s">"default"</span> ? <span class="s">""</span> : <span class="s">"-</span><span class="j">${<span class="i">terraform</span>.<span class="p">workspace</span>}</span><span class="s">"</span></div><div class="no" style="left:-4px;top:81.16px">3</div><div class="ln" style="left:137px;top:80.82px">  <span class="p">module_name</span>    = <span class="s">"ecs"</span></div><div class="no" style="left:-4px;top:121.32px">4</div><div class="ln" style="left:137px;top:120.98px">  <span class="p">res_prefix</span>     = <span class="s">"</span><span class="j">${<span class="i">var</span>.<span class="p">prefix</span>}${<span class="i">local</span>.<span class="p">workspace_name</span>}</span><span class="s">"</span></div><div class="no" style="left:-4px;top:161.48px">5</div><div class="ln" style="left:137px;top:161.14px">  <span class="p">default_tags</span> = {</div><div class="no" style="left:-4px;top:201.64px">6</div><div class="ln" style="left:137px;top:201.3px">    <span class="p">Resprefix</span> = <span class="i">local</span>.<span class="p">res_prefix</span></div><div class="no" style="left:-4px;top:241.8px">7</div><div class="ln" style="left:137px;top:241.46px">    <span class="p">Prefix</span>    = <span class="i">var</span>.<span class="p">prefix</span></div><div class="no" style="left:-4px;top:281.96px">8</div><div class="ln" style="left:137px;top:281.62px">    <span class="p">Workspace</span> = <span class="i">terraform</span>.<span class="p">workspace</span></div><div class="no" style="left:-4px;top:322.12px">9</div><div class="ln" style="left:137px;top:321.78px">    <span class="p">Module</span>    = <span class="i">local</span>.<span class="p">module_name</span></div><div class="no" style="left:-4px;top:362.28px">10</div><div class="ln" style="left:137px;top:361.94px">    <span class="p">Terraform</span> = <span class="s">"true"</span></div><div class="no" style="left:-4px;top:402.44px">11</div><div class="ln" style="left:137px;top:402.1px">  }</div><div class="no" style="left:-4px;top:442.6px">12</div><div class="ln" style="left:137px;top:442.26px">}</div><div class="no" style="left:-4px;top:482.76px">13</div><div class="no" style="left:-4px;top:522.92px">14</div><div class="ln" style="left:137px;top:522.58px"><span class="c"># Cluster is a collection of compute resources that can run tasks and services (docker containers)</span></div><div class="no" style="left:-4px;top:563.08px">15</div><div class="ln" style="left:137px;top:562.74px"><span class="k">resource</span> <span class="r">"aws_ecs_cluster"</span> <span class="r">"backend"</span> {</div><div class="no" style="left:-4px;top:603.24px">16</div><div class="ln" style="left:137px;top:602.9px">  <span class="p">name</span> = <span class="s">"</span><span class="j">${<span class="i">local</span>.<span class="p">res_prefix</span>}</span><span class="s">-backend"</span></div><div class="no" style="left:-4px;top:643.4px">17</div><div class="no" style="left:-4px;top:683.56px">18</div><div class="ln" style="left:137px;top:683.22px">  <span class="k">setting</span> {</div><div class="no" style="left:-4px;top:723.72px">19</div><div class="ln" style="left:137px;top:723.38px">    <span class="p">name</span>  = <span class="s">"containerInsights"</span></div><div class="no" style="left:-4px;top:763.88px">20</div><div class="ln" style="left:137px;top:763.54px">    <span class="p">value</span> = <span class="s">"enabled"</span></div><div class="no" style="left:-4px;top:804.04px">21</div><div class="ln" style="left:137px;top:803.7px">  }</div><div class="no" style="left:-4px;top:844.2px">22</div><div class="no" style="left:-4px;top:884.36px">23</div><div class="ln" style="left:137px;top:884.02px">  <span class="p">tags</span> = <span class="r">merge</span>(<span class="i">local</span>.<span class="p">default_tags</span>, {</div><div class="no" style="left:-4px;top:924.52px">24</div><div class="ln" style="left:137px;top:924.18px">    <span class="p">Name</span> = <span class="s">"</span><span class="j">${<span class="i">local</span>.<span class="p">res_prefix</span>}</span><span class="s">-backend"</span></div><div class="no" style="left:-4px;top:964.68px">25</div><div class="ln" style="left:137px;top:964.34px">  })</div><div class="no" style="left:-4px;top:1004.84px">26</div><div class="ln" style="left:137px;top:1004.5px">}</div><div class="no" style="left:-4px;top:1045.0px">27</div><div class="no" style="left:-4px;top:1085.16px">28</div><div class="ln" style="left:137px;top:1084.82px"><span class="c"># Service will keep a desired amount of docker containers always running</span></div><div class="no" style="left:-4px;top:1125.32px">29</div><div class="ln" style="left:137px;top:1124.98px"><span class="c"># Service can also be attached to a load balancer for HTTP, TCP or UDP traffic</span></div><div class="no" style="left:-4px;top:1165.48px">30</div><div class="ln" style="left:137px;top:1165.14px"><span class="k">resource</span> <span class="r">"aws_ecs_service"</span> <span class="r">"backend"</span> {</div><div class="no" style="left:-4px;top:1205.64px">31</div><div class="ln" style="left:137px;top:1205.3px">  <span class="p">name</span>            = <span class="s">"</span><span class="j">${<span class="i">local</span>.<span class="p">res_prefix</span>}</span><span class="s">-backend"</span></div><div class="no" style="left:-4px;top:1245.8px">32</div><div class="ln" style="left:137px;top:1245.46px">  <span class="p">cluster</span>         = <span class="r">aws_ecs_cluster</span>.<span class="r">backend</span>.<span class="p">id</span></div><div class="no" style="left:-4px;top:1285.96px">33</div><div class="ln" style="left:137px;top:1285.62px">  <span class="p">task_definition</span> = <span class="r">aws_ecs_task_definition</span>.<span class="r">backend</span>.<span class="p">arn</span></div><div class="no" style="left:-4px;top:1326.12px">34</div><div class="ln" style="left:137px;top:1325.78px">  <span class="p">desired_count</span>   = <span class="i">var</span>.<span class="p">desired_count</span></div><div class="no" style="left:-4px;top:1366.28px">35</div><div class="no" style="left:-4px;top:1406.44px">36</div><div class="ln" style="left:137px;top:1406.1px">  <span class="c"># We run containers with the Fargate launch type. The other alternative is EC2, in which case you launch</span></div><div class="no" style="left:-4px;top:1446.6px">37</div><div class="ln" style="left:137px;top:1446.26px">  <span class="c"># instances and attach them to the cluster.</span></div><div class="no" style="left:-4px;top:1486.76px">38</div><div class="ln" style="left:137px;top:1486.42px">  <span class="p">launch_type</span> = <span class="s">"FARGATE"</span></div><div class="no" style="left:-4px;top:1526.92px">39</div><div class="no" style="left:-4px;top:1567.08px">40</div><div class="ln" style="left:137px;top:1566.74px">  <span class="k">load_balancer</span> {</div><div class="no" style="left:-4px;top:1607.24px">41</div><div class="ln" style="left:137px;top:1606.9px">    <span class="p">target_group_arn</span> = <span class="r">aws_lb_target_group</span>.<span class="r">backend</span>.<span class="p">arn</span></div><div class="no" style="left:-4px;top:1647.4px">42</div><div class="ln" style="left:137px;top:1647.06px">    <span class="p">container_name</span>   = <span class="s">"</span><span class="j">${<span class="i">local</span>.<span class="p">res_prefix</span>}</span><span class="s">-backend"</span></div><div class="no" style="left:-4px;top:1687.56px">43</div><div class="ln" style="left:137px;top:1687.22px">    <span class="p">container_port</span>   = <span class="i">var</span>.<span class="p">backend_port</span></div><div class="no" style="left:-4px;top:1727.72px">44</div><div class="ln" style="left:137px;top:1727.38px">  }</div><div class="no" style="left:-4px;top:1767.88px">45</div><div class="no" style="left:-4px;top:1808.04px">46</div><div class="ln" style="left:137px;top:1807.7px">  <span class="k">network_configuration</span> {</div><div class="no" style="left:-4px;top:1848.2px">47</div><div class="ln" style="left:137px;top:1847.86px">    <span class="c"># Fargate uses </span><span class="c w">awspvc</span><span class="c"> networking, we tell here into what subnets to attach the service</span></div><div class="no" style="left:-4px;top:1888.36px">48</div><div class="ln" style="left:137px;top:1888.02px">    <span class="p">subnets</span> = <span class="i">data</span>.<span class="p">terraform_remote_state</span>.<span class="p">network</span>.<span class="p">outputs</span>.<span class="p">private_subnet_ids</span></div><div class="no" style="left:-4px;top:1928.52px">49</div><div class="ln" style="left:137px;top:1928.18px">    <span class="c"># Ditto for security groups</span></div><svg style="left:120.19999999999999px;top:14.24px" width="17" height="19.500" viewBox="0 0 16 19" preserveAspectRatio="none"><path d="M1 1h14v10l-7 7l-7-7z" fill="#fff" stroke="#cbcbcb" stroke-width="1.600"/><path d="M4 7h8" stroke="#b8b8b8" stroke-width="1.600"/></svg><svg style="left:120.19999999999999px;top:174.88px" width="17" height="19.500" viewBox="0 0 16 19" preserveAspectRatio="none"><path d="M1 1h14v10l-7 7l-7-7z" fill="#fff" stroke="#cbcbcb" stroke-width="1.600"/><path d="M4 7h8" stroke="#b8b8b8" stroke-width="1.600"/></svg><svg style="left:120.19999999999999px;top:576.48px" width="17" height="19.500" viewBox="0 0 16 19" preserveAspectRatio="none"><path d="M1 1h14v10l-7 7l-7-7z" fill="#fff" stroke="#cbcbcb" stroke-width="1.600"/><path d="M4 7h8" stroke="#b8b8b8" stroke-width="1.600"/></svg><svg style="left:120.19999999999999px;top:696.96px" width="17" height="19.500" viewBox="0 0 16 19" preserveAspectRatio="none"><path d="M1 1h14v10l-7 7l-7-7z" fill="#fff" stroke="#cbcbcb" stroke-width="1.600"/><path d="M4 7h8" stroke="#b8b8b8" stroke-width="1.600"/></svg><svg style="left:120.19999999999999px;top:897.76px" width="17" height="19.500" viewBox="0 0 16 19" preserveAspectRatio="none"><path d="M1 1h14v10l-7 7l-7-7z" fill="#fff" stroke="#cbcbcb" stroke-width="1.600"/><path d="M4 7h8" stroke="#b8b8b8" stroke-width="1.600"/></svg><svg style="left:120.19999999999999px;top:1098.56px" width="17" height="19.500" viewBox="0 0 16 19" preserveAspectRatio="none"><path d="M1 1h14v10l-7 7l-7-7z" fill="#fff" stroke="#cbcbcb" stroke-width="1.600"/><path d="M4 7h8" stroke="#b8b8b8" stroke-width="1.600"/></svg><svg style="left:120.19999999999999px;top:1178.88px" width="17" height="19.500" viewBox="0 0 16 19" preserveAspectRatio="none"><path d="M1 1h14v10l-7 7l-7-7z" fill="#fff" stroke="#cbcbcb" stroke-width="1.600"/><path d="M4 7h8" stroke="#b8b8b8" stroke-width="1.600"/></svg><svg style="left:120.19999999999999px;top:1580.48px" width="17" height="19.500" viewBox="0 0 16 19" preserveAspectRatio="none"><path d="M1 1h14v10l-7 7l-7-7z" fill="#fff" stroke="#cbcbcb" stroke-width="1.600"/><path d="M4 7h8" stroke="#b8b8b8" stroke-width="1.600"/></svg><svg style="left:120.19999999999999px;top:1821.44px" width="17" height="19.500" viewBox="0 0 16 19" preserveAspectRatio="none"><path d="M1 1h14v10l-7 7l-7-7z" fill="#fff" stroke="#cbcbcb" stroke-width="1.600"/><path d="M4 7h8" stroke="#b8b8b8" stroke-width="1.600"/></svg><svg style="left:120.19999999999999px;top:412.84px" width="17" height="19.500" viewBox="0 0 16 19" preserveAspectRatio="none"><path d="M1 18h14v-10l-7-7l-7 7z" fill="#fff" stroke="#cbcbcb" stroke-width="1.600"/><path d="M4 12h8" stroke="#b8b8b8" stroke-width="1.600"/></svg><svg style="left:120.19999999999999px;top:453.0px" width="17" height="19.500" viewBox="0 0 16 19" preserveAspectRatio="none"><path d="M1 18h14v-10l-7-7l-7 7z" fill="#fff" stroke="#cbcbcb" stroke-width="1.600"/><path d="M4 12h8" stroke="#b8b8b8" stroke-width="1.600"/></svg><svg style="left:120.19999999999999px;top:814.44px" width="17" height="19.500" viewBox="0 0 16 19" preserveAspectRatio="none"><path d="M1 18h14v-10l-7-7l-7 7z" fill="#fff" stroke="#cbcbcb" stroke-width="1.600"/><path d="M4 12h8" stroke="#b8b8b8" stroke-width="1.600"/></svg><svg style="left:120.19999999999999px;top:975.08px" width="17" height="19.500" viewBox="0 0 16 19" preserveAspectRatio="none"><path d="M1 18h14v-10l-7-7l-7 7z" fill="#fff" stroke="#cbcbcb" stroke-width="1.600"/><path d="M4 12h8" stroke="#b8b8b8" stroke-width="1.600"/></svg><svg style="left:120.19999999999999px;top:1015.24px" width="17" height="19.500" viewBox="0 0 16 19" preserveAspectRatio="none"><path d="M1 18h14v-10l-7-7l-7 7z" fill="#fff" stroke="#cbcbcb" stroke-width="1.600"/><path d="M4 12h8" stroke="#b8b8b8" stroke-width="1.600"/></svg><svg style="left:120.19999999999999px;top:1135.72px" width="17" height="19.500" viewBox="0 0 16 19" preserveAspectRatio="none"><path d="M1 18h14v-10l-7-7l-7 7z" fill="#fff" stroke="#cbcbcb" stroke-width="1.600"/><path d="M4 12h8" stroke="#b8b8b8" stroke-width="1.600"/></svg><svg style="left:120.19999999999999px;top:1738.12px" width="17" height="19.500" viewBox="0 0 16 19" preserveAspectRatio="none"><path d="M1 18h14v-10l-7-7l-7 7z" fill="#fff" stroke="#cbcbcb" stroke-width="1.600"/><path d="M4 12h8" stroke="#b8b8b8" stroke-width="1.600"/></svg><svg style="left:198.27px;top:235.24px" width="137.853" height="4"><polyline points="0,3.5 3,0.5 6,3.5 9,0.5 12,3.5 15,0.5 18,3.5 21,0.5 24,3.5 27,0.5 30,3.5 33,0.5 36,3.5 39,0.5 42,3.5 45,0.5 48,3.5 51,0.5 54,3.5 57,0.5 60,3.5 63,0.5 66,3.5 69,0.5 72,3.5 75,0.5 78,3.5 81,0.5 84,3.5 87,0.5 90,3.5 93,0.5 96,3.5 99,0.5 102,3.5 105,0.5 108,3.5 111,0.5 114,3.5 117,0.5 120,3.5 123,0.5 126,3.5 129,0.5 132,3.5 135,0.5" fill="none" stroke="#9fc59f" stroke-width="1"/></svg><svg style="left:428.02px;top:1881.8px" width="91.902" height="4"><polyline points="0,3.5 3,0.5 6,3.5 9,0.5 12,3.5 15,0.5 18,3.5 21,0.5 24,3.5 27,0.5 30,3.5 33,0.5 36,3.5 39,0.5 42,3.5 45,0.5 48,3.5 51,0.5 54,3.5 57,0.5 60,3.5 63,0.5 66,3.5 69,0.5 72,3.5 75,0.5 78,3.5 81,0.5 84,3.5 87,0.5 90,3.5" fill="none" stroke="#9fc59f" stroke-width="1"/></svg><div style="left:1449px;top:51px;width:19px;height:434px;background:rgba(0,0,0,.14);"></div><div style="left:139px;top:1936px;width:581px;height:19px;background:rgba(0,0,0,.12);"></div><div style="left:1304px;top:1px;width:160px;height:48px;background:#fff;"></div><svg style="left:1319px;top:16px" width="26" height="24" viewBox="0 0 26 24"><path d="M3 10l6 6L23 2" stroke="#59a869" stroke-width="4" fill="none"/><path d="M1 20l4-3 4 3 4-3 4 3 4-3 4 3" stroke="#59a869" stroke-width="1.6" fill="none"/></svg><div style="left:1349px;top:6px;height:40px;line-height:40px;transform:scaleY(1.035);transform-origin:0 29.3px;"><span style="font-size:22.5px;color:#8a8a8a;letter-spacing:-.6px">10</span></div><svg style="left:1395px;top:19px" width="20" height="12" viewBox="0 0 20 12"><path d="M2 10l8-8 8 8" stroke="#7a7a7a" stroke-width="2.4" fill="none"/></svg><svg style="left:1435px;top:21px" width="20" height="12" viewBox="0 0 20 12"><path d="M2 2l8 8 8-8" stroke="#7a7a7a" stroke-width="2.4" fill="none"/></svg></div>
<div style="left:625.2px;top:186px;width:1.7px;height:2055px;background:#cbcbcb;"></div>
<div style="left:626px;top:2192px;width:1468px;height:1px;background:#d0d0d0;"></div>
<div style="left:2095px;top:185px;width:1682px;height:52px;background:#f2f2f2;border-bottom:1px solid #d0d0d0;"></div>
<div style="left:2096px;top:186px;width:244px;height:51px;background:#fff;"></div>
<div style="left:2096px;top:232px;width:244px;height:6px;background:#3f80c8;"></div>
<svg style="left:2110px;top:195px" width="32" height="32"><use href="#sh"/></svg>
<div style="left:2149px;top:189px;height:47px;line-height:47px;transform:scaleY(1.035);transform-origin:0 32.8px;"><span style="letter-spacing:-0.699px;">apply-all.sh</span></div>
<svg style="left:2310px;top:201px" width="16" height="16" viewBox="0 0 16 16"><path d="M2 2l12 12M14 2l-12 12" stroke="#b4b4b4" stroke-width="1.6"/></svg>
<div style="left:2095px;top:237px;width:1682px;height:2004px;background:#fff;overflow:hidden;"><div style="left:0px;top:0px;width:112.5px;height:2004px;background:#f4f4f4;border-right:1.5px solid #d4d4d4;"></div><div style="left:0px;top:41.0px;width:1682px;height:40.5px;background:#fffaf0;"></div><div style="left:111.0px;top:0px;width:1.5px;height:2004px;background:#d4d4d4;"></div><div style="left:229.72px;top:1166.48px;width:245.072px;height:38.5px;background:#f6ebbc;"></div><div class="no" style="left:-20px;top:0.84px">1</div><div class="ln" style="left:122.5px;top:0.5px"><span class="B">#!/usr/bin/env bash</span></div><div class="no" style="left:-20px;top:41.0px">2</div><div class="no" style="left:-20px;top:81.16px">3</div><div class="ln" style="left:122.5px;top:80.82px"><span class="b">set</span> -eu -o pipefail</div><div class="no" style="left:-20px;top:121.32px">4</div><div class="no" style="left:-20px;top:161.48px">5</div><div class="ln" style="left:122.5px;top:161.14px"><span class="c"># Helper script for applying all modules in dependency order and building the application</span></div><div class="no" style="left:-20px;top:201.64px">6</div><div class="no" style="left:-20px;top:241.8px">7</div><div class="ln" style="left:122.5px;top:241.46px"><span class="f">apply_module</span>() {</div><div class="no" style="left:-20px;top:281.96px">8</div><div class="ln" style="left:122.5px;top:281.62px">    <span class="b">local</span> <span class="v">MODULE</span>=<span class="v">$1</span></div><div class="no" style="left:-20px;top:322.12px">9</div><div class="ln" style="left:122.5px;top:321.78px">    <span class="b">echo</span> <span class="s">"Applying </span><span class="v">$MODULE</span><span class="s">"</span></div><div class="no" style="left:-20px;top:362.28px">10</div><div class="ln" style="left:122.5px;top:361.94px">    <span class="b">pushd</span> modules/<span class="v w2">$MODULE</span> <span class="o">&gt;</span> /dev/null</div><div class="no" style="left:-20px;top:402.44px">11</div><div class="ln" style="left:122.5px;top:402.1px">    <span class="b">source</span> ../../../tools/terraform-init</div><div class="no" style="left:-20px;top:442.6px">12</div><div class="ln" style="left:122.5px;top:442.26px">    <span class="b">terraform</span> apply -auto-approve</div><div class="no" style="left:-20px;top:482.76px">13</div><div class="ln" style="left:122.5px;top:482.42px">    <span class="b">popd</span> <span class="o">&gt;</span> /dev/null</div><div class="no" style="left:-20px;top:522.92px">14</div><div class="ln" style="left:122.5px;top:522.58px">}</div><div class="no" style="left:-20px;top:563.08px">15</div><div class="no" style="left:-20px;top:603.24px">16</div><div class="ln" style="left:122.5px;top:602.9px"><span class="f">build_application</span>() {</div><div class="no" style="left:-20px;top:643.4px">17</div><div class="ln" style="left:122.5px;top:643.06px">    <span class="b">pushd</span> application <span class="o">&gt;</span> /dev/null</div><div class="no" style="left:-20px;top:683.56px">18</div><div class="ln" style="left:122.5px;top:683.22px">    <span class="b">./build.sh</span></div><div class="no" style="left:-20px;top:723.72px">19</div><div class="ln" style="left:122.5px;top:723.38px">    <span class="b">popd</span> <span class="o">&gt;</span> /dev/null</div><div class="no" style="left:-20px;top:763.88px">20</div><div class="ln" style="left:122.5px;top:763.54px">}</div><div class="no" style="left:-20px;top:804.04px">21</div><div class="no" style="left:-20px;top:844.2px">22</div><div class="ln" style="left:122.5px;top:843.86px"><span class="b">apply_module</span> common</div><div class="no" style="left:-20px;top:884.36px">23</div><div class="ln" style="left:122.5px;top:884.02px"><span class="b">apply_module</span> network</div><div class="no" style="left:-20px;top:924.52px">24</div><div class="ln" style="left:122.5px;top:924.18px"><span class="b">apply_module</span> ecr</div><div class="no" style="left:-20px;top:964.68px">25</div><div class="ln" style="left:122.5px;top:964.34px"><span class="b">apply_module</span> rds</div><div class="no" style="left:-20px;top:1004.84px">26</div><div class="no" style="left:-20px;top:1045.0px">27</div><div class="ln" style="left:122.5px;top:1044.66px"><span class="c"># Building the app creates a docker image tagged with the short Git SHA</span></div><div class="no" style="left:-20px;top:1085.16px">28</div><div class="ln" style="left:122.5px;top:1084.82px"><span class="b">build_application</span></div><div class="no" style="left:-20px;top:1125.32px">29</div><div class="ln" style="left:122.5px;top:1124.98px"><span class="c"># We specify the Git SHA also for deploy</span></div><div class="no" style="left:-20px;top:1165.48px">30</div><div class="ln" style="left:122.5px;top:1165.14px"><span class="b">export</span> <span class="v h">TF_VAR_image_tag</span>=<span class="o">$</span><span class="b">(git</span> rev-parse --short HEAD<span class="b">)</span></div><div class="no" style="left:-20px;top:1205.64px">31</div><div class="ln" style="left:122.5px;top:1205.3px"><span class="b">apply_module</span> ecs</div><div class="no" style="left:-20px;top:1245.8px">32</div><div class="ln" style="left:122.5px;top:1245.46px"><span class="b">unset</span> TF_VAR_image_tag</div><div class="no" style="left:-20px;top:1285.96px">33</div><div class="no" style="left:-20px;top:1326.12px">34</div><div class="ln" style="left:122.5px;top:1325.78px"><span class="c"># For lookup our public IP to allow access to the bastion host</span></div><div class="no" style="left:-20px;top:1366.28px">35</div><div class="ln" style="left:122.5px;top:1365.94px"><span class="v">PUBLIC_IP</span>=<span class="o">$</span><span class="b">(curl</span> -s ifconfig.co<span class="b">)</span></div><div class="no" style="left:-20px;top:1406.44px">36</div><div class="ln" style="left:122.5px;top:1406.1px"><span class="b">export</span> <span class="v">TF_VAR_developer_ips</span>=\[\"<span class="s">"</span><span class="v">$PUBLIC_IP</span><span class="s">/32"</span>\"\]</div><div class="no" style="left:-20px;top:1446.6px">37</div><div class="ln" style="left:122.5px;top:1446.26px"><span class="b">apply_module</span> bastion</div><div class="no" style="left:-20px;top:1486.76px">38</div><div class="ln" style="left:122.5px;top:1486.42px"><span class="b">unset</span> TF_VAR_developer_ips</div><div class="no" style="left:-20px;top:1526.92px">39</div><div class="no" style="left:-20px;top:1567.08px">40</div><div class="ln" style="left:122.5px;top:1566.74px"><span class="b">apply_module</span> resource-groups</div><div class="no" style="left:-20px;top:1607.24px">41</div><div class="ln" style="left:122.5px;top:1606.9px"><span class="b">apply_module</span> dashboard</div><div class="no" style="left:-20px;top:1647.4px">42</div><svg style="left:59px;top:7px" width="20" height="24" viewBox="0 0 20 24"><path d="M3 2l15 10-15 10z" fill="#59a869"/></svg><svg style="left:138px;top:10px" width="22" height="30" viewBox="0 0 22 30"><circle cx="11" cy="10" r="9" fill="#f2a30f"/><path d="M6 15h10v5h-10z" fill="#f2a30f"/><path d="M6 23h10M7 27h8" stroke="#8a8a8a" stroke-width="1.8"/></svg><div style="left:123.5px;top:45.0px;width:3px;height:33px;background:#000;"></div><svg style="left:398.21px;top:396.48px" width="107.219" height="4"><polyline points="0,3.5 3,0.5 6,3.5 9,0.5 12,3.5 15,0.5 18,3.5 21,0.5 24,3.5 27,0.5 30,3.5 33,0.5 36,3.5 39,0.5 42,3.5 45,0.5 48,3.5 51,0.5 54,3.5 57,0.5 60,3.5 63,0.5 66,3.5 69,0.5 72,3.5 75,0.5 78,3.5 81,0.5 84,3.5 87,0.5 90,3.5 93,0.5 96,3.5 99,0.5 102,3.5 105,0.5" fill="none" stroke="#c9c9c9" stroke-width="1"/></svg><svg style="left:246px;top:711px" width="12" height="30" viewBox="0 0 12 30"><path d="M1 1.5h4M7 1.5h4M1 28.5h4M7 28.5h4M6 2v26" stroke="#222" stroke-width="2" fill="none"/></svg><div style="left:1474px;top:0px;width:204px;height:46px;background:#fff;border-radius:0 0 8px 8px;"></div><svg style="left:1490.5px;top:14px" width="24" height="22" viewBox="0 0 24 22"><path d="M12 1L23 21H1z" fill="#eac30a"/><path d="M12 8v6" stroke="#fff" stroke-width="2.6"/><circle cx="12" cy="17.5" r="1.5" fill="#fff"/></svg><svg style="left:1548px;top:14px" width="24" height="22" viewBox="0 0 24 22"><path d="M12 1L23 21H1z" fill="#dcd6b6"/><path d="M12 8v6" stroke="#fff" stroke-width="2.6"/><circle cx="12" cy="17.5" r="1.5" fill="#fff"/></svg><div style="left:1519px;top:6px;height:40px;line-height:40px;transform:scaleY(1.035);transform-origin:0 29.3px;"><span style="font-size:22.5px;color:#8a8a8a">1</span></div><div style="left:1577px;top:6px;height:40px;line-height:40px;transform:scaleY(1.035);transform-origin:0 29.3px;"><span style="font-size:22.5px;color:#8a8a8a">1</span></div><svg style="left:1608px;top:19px" width="20" height="12" viewBox="0 0 20 12"><path d="M2 10l8-8 8 8" stroke="#7a7a7a" stroke-width="2.4" fill="none"/></svg><svg style="left:1649px;top:21px" width="20" height="12" viewBox="0 0 20 12"><path d="M2 2l8 8 8-8" stroke="#7a7a7a" stroke-width="2.4" fill="none"/></svg><div style="left:1655px;top:412px;width:27px;height:2.5px;background:#d9cfa0;"></div><div style="left:1655px;top:1215px;width:27px;height:2.5px;background:#ebc700;"></div></div>
<div style="left:2094px;top:185px;width:1.5px;height:2056px;background:#c9c9c9;"></div>
</body></html>
